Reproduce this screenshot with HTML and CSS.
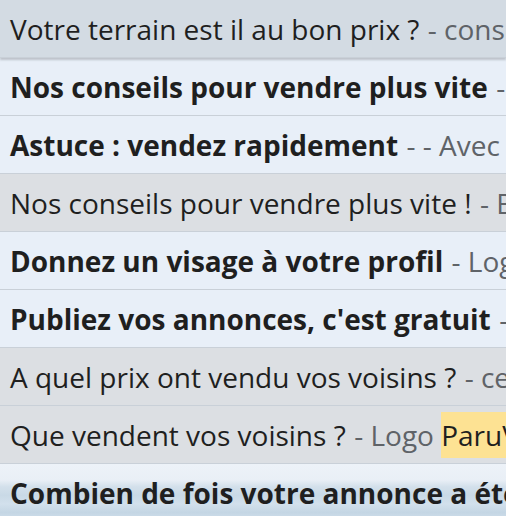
FILE: index.html
```html
<!DOCTYPE html>
<html lang="fr">
<head>
<meta charset="utf-8">
<link rel="stylesheet" href="styles.css">
</head>
<body>
<div class="list">
  <div class="row read hover"><span class="subj">Votre terrain est il au bon prix ?</span><span class="snip">- conseils pour bien vendre votre terrain</span></div>
  <div class="row unread"><span class="subj">Nos conseils pour vendre plus vite</span><span class="snip">- Bonjour</span></div>
  <div class="row unread"><span class="subj">Astuce : vendez rapidement</span><span class="snip">- - Avec nos conseils</span></div>
  <div class="row read"><span class="subj">Nos conseils pour vendre plus vite !</span><span class="snip">- Bonjour</span></div>
  <div class="row unread"><span class="subj">Donnez un visage à votre profil</span><span class="snip">- Logo ParuVendu</span></div>
  <div class="row unread"><span class="subj">Publiez vos annonces, c'est gratuit</span><span class="snip">- Logo ParuVendu</span></div>
  <div class="row read"><span class="subj">A quel prix ont vendu vos voisins ?</span><span class="snip">- ce qui s'est vendu</span></div>
  <div class="row read"><span class="subj">Que vendent vos voisins ?</span><span class="snip">- Logo <mark class="hl">ParuVendu</mark></span></div>
  <div class="row unread sea"><span class="subj">Combien de fois votre annonce a été vue ?</span><span class="snip">- Logo</span></div>
</div>
</body>
</html>
```
FILE: styles.css
```css
html, body {
  margin: 0;
  padding: 0;
  width: 506px;
  height: 516px;
  overflow: hidden;
  background: #e4ecf4;
}
.list {
  display: flex;
  flex-direction: column;
  font-family: "Open Sans", Roboto, sans-serif;
  font-size: 28px;
  color: #1f1f1f;
}
.row {
  height: 57px;
  border-bottom: 1px solid #c9d0d8;
  display: flex;
  align-items: center;
  gap: 0.3em;
  padding-left: 10px;
  padding-top: 1px;
  box-sizing: border-box;
  height: 58px;
  white-space: nowrap;
  overflow: hidden;
  flex-shrink: 0;
}
.subj, .snip { flex-shrink: 0; }
.read { background: #dcdfe3; }
.read .subj { font-weight: 400; }
.hover { background: #d3dbe3; box-shadow: 0 2px 2px rgba(60,64,67,0.25); position: relative; z-index: 1; }
.unread { background: #e8eff8; }
.unread .subj { font-weight: 700; }
.snip { color: #5f6368; }
.hl { background: #fde293; color: #1f1f1f; padding: 4px 0; }
.sea {
  background: linear-gradient(180deg, #edf2f8 0%, #e9eff6 28%, #d3e0eb 40%, #c9d9e6 55%, #d2e0ec 70%, #c4d6e4 85%, #d2e0ec 100%);
}
```
